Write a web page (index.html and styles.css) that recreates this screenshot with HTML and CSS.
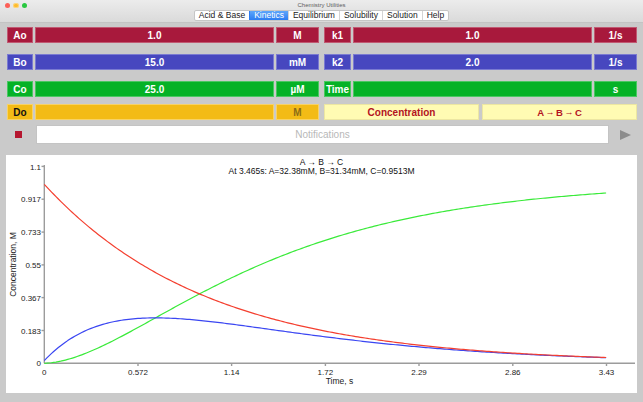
FILE: index.html
```html
<!DOCTYPE html>
<html lang="en">
<head>
<meta charset="utf-8">
<title>Chemistry Utilities</title>
<link rel="stylesheet" href="styles.css">
</head>
<body>
<header class="titlebar">
  <div class="title-row">
    <div class="lights">
      <span class="light red"></span><span class="light yellow"></span><span class="light green"></span>
    </div>
    <div class="title">Chemistry Utilities</div>
  </div>
  <nav class="tabs">
    <div class="tab-group">
      <span class="tab">Acid &amp; Base</span><span class="tab active">Kinetics</span><span class="tab">Equilibrium</span><span class="tab">Solubility</span><span class="tab">Solution</span><span class="tab">Help</span>
    </div>
  </nav>
</header>

<main class="panel">
  <div class="row">
    <div class="group left">
      <div class="cell crimson">Ao</div><div class="cell crimson">1.0</div><div class="cell crimson">M</div>
    </div>
    <div class="group right">
      <div class="cell crimson">k1</div><div class="cell crimson">1.0</div><div class="cell crimson">1/s</div>
    </div>
  </div>
  <div class="row">
    <div class="group left">
      <div class="cell blue">Bo</div><div class="cell blue">15.0</div><div class="cell blue">mM</div>
    </div>
    <div class="group right">
      <div class="cell blue">k2</div><div class="cell blue">2.0</div><div class="cell blue">1/s</div>
    </div>
  </div>
  <div class="row">
    <div class="group left">
      <div class="cell green">Co</div><div class="cell green">25.0</div><div class="cell green">µM</div>
    </div>
    <div class="group right">
      <div class="cell green">Time</div><div class="cell green"></div><div class="cell green">s</div>
    </div>
  </div>
  <div class="row last">
    <div class="group left">
      <div class="cell yellow dark">Do</div><div class="cell yellow"></div><div class="cell yellow dim">M</div>
    </div>
    <div class="group right halves">
      <div class="cell pale">Concentration</div><div class="cell pale arrows">A<span class="arr">→</span>B<span class="arr">→</span>C</div>
    </div>
  </div>

  <div class="notify">
    <span class="stop"></span>
    <div class="notify-box">Notifications</div>
    <span class="play"></span>
  </div>

  <section class="plot">
    <svg class="chart" width="631" height="238" viewBox="0 0 631 238">
      <text class="chart-title" x="315.5" y="9.5">A → B → C</text>
      <text class="chart-title" x="315.5" y="19">At 3.465s: A=32.38mM, B=31.34mM, C=0.9513M</text>

      <g class="axis">
        <line x1="38.3" y1="10" x2="38.3" y2="208.3"/>
        <line x1="38.3" y1="208.3" x2="629" y2="208.3"/>
        <line x1="35.5" y1="11.4" x2="38.3" y2="11.4"/>
        <line x1="35.5" y1="44.2" x2="38.3" y2="44.2"/>
        <line x1="35.5" y1="77.1" x2="38.3" y2="77.1"/>
        <line x1="35.5" y1="109.9" x2="38.3" y2="109.9"/>
        <line x1="35.5" y1="142.6" x2="38.3" y2="142.6"/>
        <line x1="35.5" y1="175.5" x2="38.3" y2="175.5"/>
        <line x1="132" y1="208.3" x2="132" y2="211"/>
        <line x1="225.6" y1="208.3" x2="225.6" y2="211"/>
        <line x1="319.4" y1="208.3" x2="319.4" y2="211"/>
        <line x1="413" y1="208.3" x2="413" y2="211"/>
        <line x1="506.8" y1="208.3" x2="506.8" y2="211"/>
        <line x1="600.5" y1="208.3" x2="600.5" y2="211"/>
      </g>

      <g class="ylabels">
        <text x="35" y="14.5">1.1</text>
        <text x="35" y="47.3">0.917</text>
        <text x="35" y="80.2">0.733</text>
        <text x="35" y="113">0.55</text>
        <text x="35" y="145.7">0.367</text>
        <text x="35" y="178.6">0.183</text>
        <text x="35" y="211.4">0</text>
      </g>
      <g class="xlabels">
        <text x="38.3" y="220">0</text>
        <text x="132" y="220">0.572</text>
        <text x="225.6" y="220">1.14</text>
        <text x="319.4" y="220">1.72</text>
        <text x="413" y="220">2.29</text>
        <text x="506.8" y="220">2.86</text>
        <text x="600.5" y="220">3.43</text>
      </g>
      <text class="axis-title" x="333.5" y="228.5">Time, s</text>
      <text class="axis-title" transform="translate(10 109.5) rotate(-90)">Concentration, M</text>

      <polyline id="curveC" class="curve c" points=""/>
      <polyline id="curveB" class="curve b" points=""/>
      <polyline id="curveA" class="curve a" points=""/>
    </svg>
  </section>
</main>
<script src="script.js"></script>
</body>
</html>
```

FILE: styles.css
```css
* { box-sizing: border-box; margin: 0; padding: 0; }
html, body { width: 643px; height: 402px; overflow: hidden; }
body {
  background: #cacaca;
  font-family: "Liberation Sans", Arial, sans-serif;
}

/* window chrome */
.titlebar {
  height: 23px;
  background: linear-gradient(#ececec, #dadada);
  border-bottom: 1px solid #c3c3c3;
}
.title-row {
  height: 9.5px;
  display: grid;
  grid-template-columns: 1fr auto 1fr;
  align-items: center;
}
.lights { display: flex; gap: 3px; padding-left: 4.5px; padding-top: 1.5px; }
.light { width: 5.5px; height: 5.5px; border-radius: 50%; }
.light.red { background: #fc5f57; }
.light.yellow { background: #fdbc2e; }
.light.green { background: #29c840; }
.title { font-size: 6px; color: #606060; padding-top: 1px; }

.tabs { display: flex; justify-content: center; }
.tab-group {
  display: flex;
  height: 11px;
  background: #fff;
  border: 1px solid #c6c6c6;
  border-radius: 2px;
  overflow: hidden;
}
.tab {
  font-size: 8.5px;
  line-height: 9px;
  padding: 0 4px;
  color: #222;
  border-left: 1px solid #d4d4d4;
}
.tab:first-child { border-left: 0; }
.tab.active {
  background: linear-gradient(#5ea6fa, #2c7df2);
  color: #fff;
  border-left-color: #2c7df2;
}

/* parameter grid */
.panel { padding: 4px 6px 0 7px; }
.row { display: flex; gap: 5px; height: 16px; }
.row + .row { margin-top: 11px; }
.row.last { margin-top: 7px; }
.group {
  display: grid;
  grid-template-columns: 26px 1fr 43px;
  column-gap: 2px;
  width: 312px;
}
.group.right { grid-template-columns: 27px 1fr 43px; width: 313px; }
.group.halves { grid-template-columns: 1fr 1fr; column-gap: 3px; }

.cell {
  display: flex;
  align-items: center;
  justify-content: center;
  font-size: 10px;
  font-weight: bold;
  color: #fff;
  white-space: nowrap;
  box-shadow: inset 0 0 0 1px rgba(255, 255, 255, 0.28);
}
.crimson { background: #a8193c; }
.blue { background: #4747bf; }
.green { background: #05b226; }
.yellow { background: #f3bb16; box-shadow: inset 0 0 0 1px rgba(255, 255, 255, 0.35); }
.yellow.dark { color: #111; }
.yellow.dim { color: #8a6c16; }
.pale {
  background: #fffbb3;
  color: #b3121f;
  box-shadow: inset 0 0 0 1px #ece6a2;
}
.arrows { font-size: 9.5px; }
.arr { font-size: 9px; margin: 0 1.5px; }

/* notifications */
.notify { display: flex; align-items: center; height: 19px; margin-top: 5px; }
.stop { width: 7px; height: 7px; background: #b5162f; margin-left: 8px; }
.notify-box {
  flex: 1;
  height: 19px;
  margin-left: 14px;
  background: #fff;
  border: 1px solid #c4c4c4;
  display: flex;
  align-items: center;
  justify-content: center;
  font-size: 10px;
  color: #b8b8b8;
}
.play {
  width: 0;
  height: 0;
  border-left: 11px solid #8c8c8c;
  border-top: 5.5px solid transparent;
  border-bottom: 5.5px solid transparent;
  margin: 0 6px 0 11px;
}

/* chart */
.plot {
  margin: 11px 0 0 -1px;
  width: 631px;
  height: 238px;
  background: #fff;
}
.chart { display: block; font-family: "Liberation Sans", Arial, sans-serif; }
.chart-title { font-size: 8.5px; fill: #111; text-anchor: middle; }
.axis line { stroke: #9c9c9c; stroke-width: 1.4; }
.ylabels text { font-size: 8px; fill: #222; text-anchor: end; }
.xlabels text { font-size: 8px; fill: #222; text-anchor: middle; }
.axis-title { font-size: 8.5px; fill: #222; text-anchor: middle; }
.curve { fill: none; stroke-width: 1.2; stroke-linejoin: round; }
.curve.a { stroke: #f43f2f; }
.curve.b { stroke: #3a46f2; }
.curve.c { stroke: #3aea3a; }
```

FILE: script.js
```js
(function () {
  var x0 = 38.3, xs = 163.8, y0 = 208.3, ys = 179, tEnd = 3.43, n = 240;
  function pts(f) {
    var out = [];
    for (var i = 0; i <= n; i++) {
      var t = tEnd * i / n;
      out.push((x0 + t * xs).toFixed(2) + ',' + (y0 - f(t) * ys).toFixed(2));
    }
    return out.join(' ');
  }
  var A0 = 1.0, B0 = 0.015, C0 = 0.000025, k1 = 1, k2 = 2;
  function A(t) { return A0 * Math.exp(-k1 * t); }
  function B(t) {
    return k1 * A0 / (k2 - k1) * (Math.exp(-k1 * t) - Math.exp(-k2 * t)) + B0 * Math.exp(-k2 * t);
  }
  function C(t) { return A0 + B0 + C0 - A(t) - B(t); }
  document.getElementById('curveA').setAttribute('points', pts(A));
  document.getElementById('curveB').setAttribute('points', pts(B));
  document.getElementById('curveC').setAttribute('points', pts(C));
})();
```
